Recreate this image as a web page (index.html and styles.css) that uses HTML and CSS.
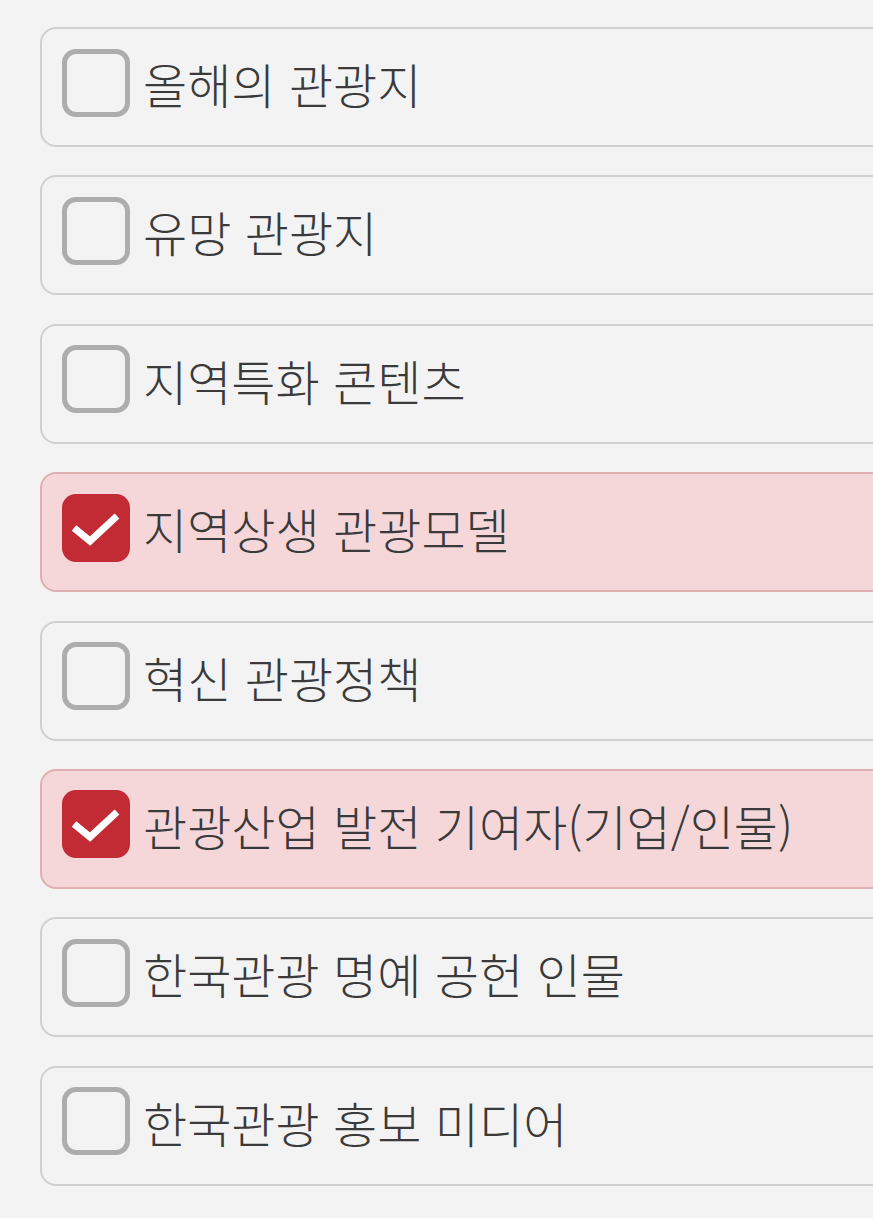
FILE: index.html
```html
<!DOCTYPE html>
<html lang="ko">
<head>
<meta charset="utf-8">
<link rel="stylesheet" href="styles.css">
</head>
<body>
<ul class="options">
  <li class="option"><span class="box"></span><span class="label">올해의 관광지</span></li>
  <li class="option"><span class="box"></span><span class="label">유망 관광지</span></li>
  <li class="option"><span class="box"></span><span class="label">지역특화 콘텐츠</span></li>
  <li class="option checked"><span class="box"><svg class="tick" viewBox="0 0 68 68"><path d="M12 34 L28 47 L55 22"/></svg></span><span class="label">지역상생 관광모델</span></li>
  <li class="option"><span class="box"></span><span class="label">혁신 관광정책</span></li>
  <li class="option checked"><span class="box"><svg class="tick" viewBox="0 0 68 68"><path d="M12 34 L28 47 L55 22"/></svg></span><span class="label">관광산업 발전 기여자(기업/인물)</span></li>
  <li class="option"><span class="box"></span><span class="label">한국관광 명예 공헌 인물</span></li>
  <li class="option"><span class="box"></span><span class="label">한국관광 홍보 미디어</span></li>
</ul>
</body>
</html>
```
FILE: styles.css
```css
html, body {
  margin: 0;
  padding: 0;
  background: #f3f3f3;
  overflow: hidden;
}
.options {
  list-style: none;
  margin: 0;
  padding: 27px 0 0 40px;
  width: 880px;
  display: flex;
  flex-direction: column;
  gap: 28.4px;
}
.option {
  box-sizing: border-box;
  height: 120px;
  border: 2px solid #d0d0d0;
  border-radius: 16px;
  background: #f3f3f3;
  display: flex;
  align-items: center;
  padding-left: 20px;
  gap: 13px;
}
.option.checked {
  background: #f5d7da;
  border-color: #dfafb2;
}
.box {
  box-sizing: border-box;
  flex: none;
  width: 68px;
  height: 68px;
  border: 5px solid #adadad;
  border-radius: 14px;
  margin-top: -9px;
}
.checked .box {
  border: none;
  background: #c22a34;
}
.tick {
  display: block;
  width: 68px;
  height: 68px;
}
.tick path {
  fill: none;
  stroke: #ffffff;
  stroke-width: 7;
  stroke-linecap: butt;
  stroke-linejoin: miter;
}
.label {
  font-family: "Noto Sans CJK KR", "Noto Sans", sans-serif;
  font-size: 48px;
  font-weight: 300;
  color: #3a3a3a;
  line-height: 1;
  white-space: nowrap;
  margin-top: -8px;
}
```
